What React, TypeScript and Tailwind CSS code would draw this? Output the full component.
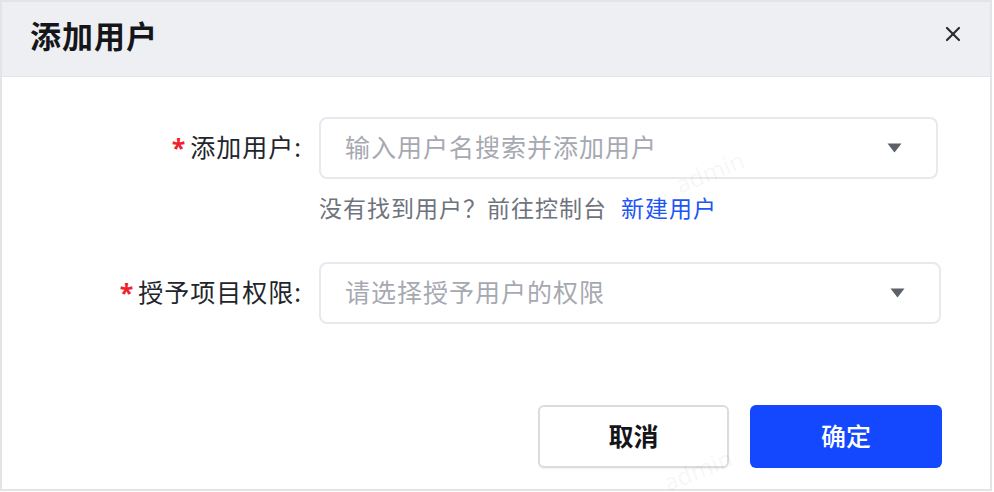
import { X } from 'lucide-react';

const font = { fontFamily: '"Noto Sans", "Noto Sans CJK SC", sans-serif' };

function Caret() {
  return (
    <svg width="15" height="10" viewBox="0 0 15 10" className="shrink-0">
      <path d="M0.5 0.5 H14.5 L7.5 9.5 Z" fill="#5d6169" />
    </svg>
  );
}

function SelectBox({ placeholder, width }: { placeholder: string; width: string }) {
  return (
    <div
      className={`${width} h-[62px] flex items-center justify-between pl-[24px] pr-[34px] border-2 border-[#e7e9ee] rounded-[8px] bg-white`}
    >
      <span className="text-[25px] tracking-[1px] text-[#a6a9b1]">{placeholder}</span>
      <Caret />
    </div>
  );
}

function Label({ text }: { text: string }) {
  return (
    <div className="w-[300px] shrink-0 flex justify-end items-center text-[25px] text-[#22252b] tracking-[1px]">
      <span className="text-[#f0202c] mr-[4px] text-[25px] font-bold">*</span>
      {text}:
    </div>
  );
}

export default function App() {
  return (
    <div className="w-[994px] h-[492px] bg-white overflow-hidden" style={font}>
      <div className="relative w-[992px] h-[491px] border-2 border-t-0 border-[#e4e4e6] flex flex-col">
        {/* Header */}
        <div className="h-[77px] shrink-0 bg-[#eeeff2] border-t-2 border-b border-[#e3e4e8] flex items-center justify-between pl-[28px] pr-[25px]">
          <h2 className="text-[31px] font-bold text-[#151619] tracking-[1px] -mt-[6px]">添加用户</h2>
          <X className="w-[24px] h-[24px] text-[#2b2d31] -mt-[10px]" strokeWidth={2.2} />
        </div>

        {/* Body */}
        <div className="flex-1 flex flex-col pt-[40px]">
          <div className="flex items-center">
            <Label text="添加用户" />
            <div className="ml-[17px]">
              <SelectBox placeholder="输入用户名搜索并添加用户" width="w-[619px]" />
            </div>
          </div>
          <div className="mt-[14px] ml-[317px] h-[30px] flex items-center text-[23px] tracking-[1px] text-[#6e737c]">
            <span>没有找到用户？前往控制台</span>
            <a className="ml-[14px] text-[#1d55f6]">新建用户</a>
          </div>

          <div className="flex items-center mt-[39px]">
            <Label text="授予项目权限" />
            <div className="ml-[17px]">
              <SelectBox placeholder="请选择授予用户的权限" width="w-[622px]" />
            </div>
          </div>

          <div className="flex justify-end gap-[21px] mt-[81px] pr-[48px]">
            <button className="w-[191px] h-[63px] rounded-[6px] border-2 border-[#dcdcdf] bg-white shadow-[0_1px_2px_rgba(0,0,0,0.06)] text-[25px] font-bold text-[#141518]">
              取消
            </button>
            <button className="w-[192px] h-[63px] rounded-[6px] bg-[#1348ff] text-[25px] font-medium text-white">
              确定
            </button>
          </div>
        </div>

        {/* Watermark */}
        <span className="absolute left-[672px] top-[154px] -rotate-[22deg] text-[24px] text-black/[0.05] pointer-events-none select-none">
          admin
        </span>
        <span className="absolute left-[660px] top-[452px] -rotate-[22deg] text-[24px] text-black/[0.05] pointer-events-none select-none">
          admin
        </span>
      </div>
    </div>
  );
}
